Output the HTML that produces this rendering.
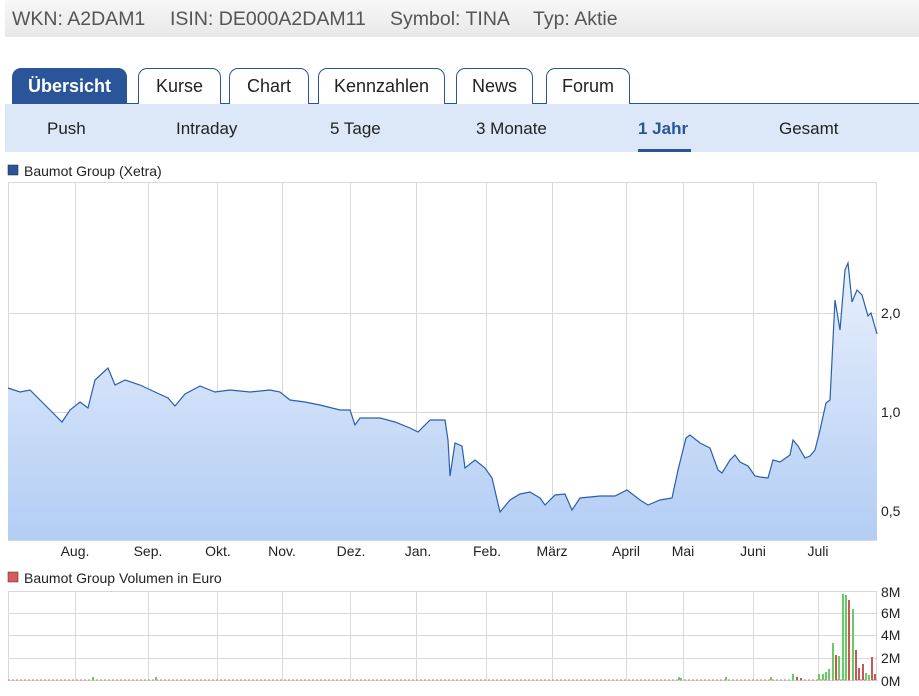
<!DOCTYPE html>
<html><head><meta charset="utf-8"><style>
body{margin:0;width:919px;height:696px;background:#fff;font-family:"Liberation Sans",sans-serif;position:relative;overflow:hidden}
.hdr{position:absolute;left:5px;top:0;width:914px;height:37px;background:linear-gradient(#f7f7f7,#e8e8e8);color:#555;font-size:19.5px;line-height:39px;white-space:nowrap}
.hdr span{position:absolute;top:0}
.tab{position:absolute;top:68px;height:35px;border:1px solid #2a5599;border-bottom:none;border-radius:9px 9px 0 0;background:#fff;font-size:18px;color:#222;text-align:center;line-height:35px}
.tab.a{background:#2a5599;color:#fff;font-weight:bold}
.line{position:absolute;left:12px;top:103px;width:907px;height:1px;background:#2a5599}
.sub{position:absolute;left:5px;top:104px;width:914px;height:48px;background:#dce8f8}
.sub div{position:absolute;top:0;font-size:17px;line-height:50px;color:#222}
</style></head><body>
<div class="hdr"><span style="left:7px">WKN: A2DAM1</span><span style="left:165px">ISIN: DE000A2DAM11</span><span style="left:385px">Symbol: TINA</span><span style="left:528px">Typ: Aktie</span></div>
<div class="line"></div>
<div class="tab a" style="left:12px;width:113px">Übersicht</div>
<div class="tab" style="left:138px;width:81px">Kurse</div>
<div class="tab" style="left:229px;width:78px">Chart</div>
<div class="tab" style="left:318px;width:125px">Kennzahlen</div>
<div class="tab" style="left:456px;width:75px">News</div>
<div class="tab" style="left:546px;width:82px">Forum</div>
<div class="sub">
<div style="left:42px">Push</div><div style="left:171px">Intraday</div><div style="left:325px">5 Tage</div><div style="left:471px">3 Monate</div>
<div style="left:633px;font-weight:bold;color:#2a5599">1 Jahr</div><div style="left:633px;top:45px;width:53px;height:3px;background:#2a5599"></div>
<div style="left:774px">Gesamt</div></div>
<svg style="position:absolute;left:0;top:0" width="919" height="696" font-family="Liberation Sans, sans-serif">
<defs><linearGradient id="g" x1="0" y1="0" x2="0" y2="1"><stop offset="0" stop-color="#e8f0fc"/><stop offset="1" stop-color="#b3cdf4"/></linearGradient></defs>
<rect x="8" y="165" width="10" height="10" fill="#2a5599" stroke="#123" stroke-width=".5"/>
<text x="24" y="176" font-size="14" fill="#222">Baumot Group (Xetra)</text>
<g stroke="#d8d8d8" stroke-width="1" fill="none">
<rect x="8.5" y="182.5" width="868" height="358"/>
<path d="M75.5 182V540M148.5 182V540M217.5 182V540M282.5 182V540M350.5 182V540M416.5 182V540M486.5 182V540M552.5 182V540M626.5 182V540M683.5 182V540M753.5 182V540M818.5 182V540M8 313.5H877M8 412.5H877M8 511.5H877"/>
</g>
<path fill="url(#g)" d="M8 388L20 392L30 390L40 400L50 410L62 422L70 410L80 402L88 408L95 380L108 368L115 385L125 380L140 385L155 392L168 398L175 406L185 394L200 386L215 392L230 390L250 392L270 390L280 392L290 400L305 402L320 405L340 410L350 410L355 425L360 418L380 418L395 422L410 428L418 432L430 420L445 420L448 440L450 476L455 443L462 446L465 468L475 460L485 468L492 478L500 512L510 500L520 494L530 492L540 498L545 505L555 495L565 494L572 510L580 498L600 496L615 496L627 490L640 500L648 505L660 500L672 498L678 470L686 438L690 435L700 443L710 448L718 470L722 473L730 460L735 455L740 462L748 466L755 476L760 477L768 478L773 460L780 462L790 455L793 440L798 446L805 458L810 456L815 450L820 430L826 403L830 400L835 300L840 330L845 270L848 263L852 302L857 290L862 295L868 316L871 313L877 334L877 540L8 540Z"/>
<path fill="none" stroke="#2a5fae" stroke-width="1.2" d="M8 388L20 392L30 390L40 400L50 410L62 422L70 410L80 402L88 408L95 380L108 368L115 385L125 380L140 385L155 392L168 398L175 406L185 394L200 386L215 392L230 390L250 392L270 390L280 392L290 400L305 402L320 405L340 410L350 410L355 425L360 418L380 418L395 422L410 428L418 432L430 420L445 420L448 440L450 476L455 443L462 446L465 468L475 460L485 468L492 478L500 512L510 500L520 494L530 492L540 498L545 505L555 495L565 494L572 510L580 498L600 496L615 496L627 490L640 500L648 505L660 500L672 498L678 470L686 438L690 435L700 443L710 448L718 470L722 473L730 460L735 455L740 462L748 466L755 476L760 477L768 478L773 460L780 462L790 455L793 440L798 446L805 458L810 456L815 450L820 430L826 403L830 400L835 300L840 330L845 270L848 263L852 302L857 290L862 295L868 316L871 313L877 334"/>
<g font-size="14" fill="#222">
<text x="881" y="318">2,0</text><text x="881" y="417">1,0</text><text x="881" y="516">0,5</text>
<g text-anchor="middle"><text x="75" y="556">Aug.</text><text x="148" y="556">Sep.</text><text x="218" y="556">Okt.</text><text x="282" y="556">Nov.</text><text x="351" y="556">Dez.</text><text x="418" y="556">Jan.</text><text x="487" y="556">Feb.</text><text x="552" y="556">März</text><text x="626" y="556">April</text><text x="683" y="556">Mai</text><text x="753" y="556">Juni</text><text x="818" y="556">Juli</text></g>
<text x="24" y="583">Baumot Group Volumen in Euro</text>
<text x="881" y="597">8M</text><text x="881" y="618">6M</text><text x="881" y="640">4M</text><text x="881" y="663">2M</text><text x="881" y="686">0M</text>
</g>
<rect x="8" y="572" width="10" height="10" fill="#d65c5c" stroke="#422" stroke-width=".5"/>
<g stroke="#d8d8d8" fill="none"><rect x="8.5" y="591.5" width="868" height="89"/>
<path d="M75.5 591V680M148.5 591V680M217.5 591V680M282.5 591V680M350.5 591V680M416.5 591V680M486.5 591V680M552.5 591V680M626.5 591V680M683.5 591V680M753.5 591V680M818.5 591V680M8 613.5H877M8 635.5H877M8 658.5H877"/></g>
<path stroke="#c77" stroke-width="1" stroke-dasharray="2 2" d="M8 680H877"/>
<g fill="#6c6">
<rect x="832" y="643" width="2" height="37"/><rect x="838" y="656" width="2" height="24"/><rect x="842" y="594" width="2" height="86"/><rect x="845" y="595" width="2" height="85"/><rect x="852" y="609" width="2" height="71"/><rect x="865" y="673" width="2" height="7"/><rect x="868" y="675" width="2" height="5"/><rect x="818" y="674" width="2" height="6"/><rect x="822" y="674" width="2" height="6"/><rect x="825" y="672" width="2" height="8"/><rect x="828" y="669" width="2" height="11"/><rect x="792" y="674" width="2" height="6"/><rect x="678" y="677" width="2" height="3"/><rect x="725" y="677" width="2" height="3"/><rect x="770" y="677" width="2" height="3"/><rect x="92" y="677" width="2" height="3"/><rect x="155" y="677" width="2" height="3"/><rect x="680" y="678" width="2" height="2"/>
</g>
<g fill="#c55">
<rect x="835" y="655" width="2" height="25"/><rect x="848" y="600" width="2" height="80"/><rect x="855" y="650" width="2" height="30"/><rect x="858" y="668" width="2" height="12"/><rect x="862" y="664" width="2" height="16"/><rect x="871" y="657" width="2" height="23"/><rect x="874" y="674" width="2" height="6"/><rect x="796" y="677" width="2" height="3"/><rect x="800" y="678" width="2" height="2"/>
</g>
</svg>
</body></html>
